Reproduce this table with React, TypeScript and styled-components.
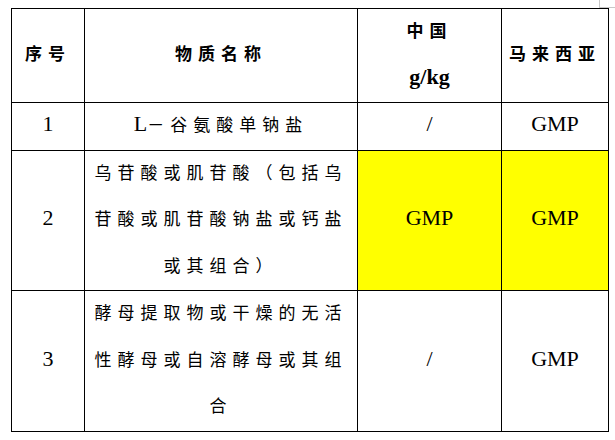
import styled, { createGlobalStyle } from 'styled-components';

const GlobalStyle = createGlobalStyle`
  html, body {
    margin: 0;
    padding: 0;
    background: #fff;
  }
  body {
    font-family: "Liberation Serif", "Noto Sans CJK SC", serif;
    color: #000;
  }
`;

const Page = styled.div`
  position: relative;
  width: 615px;
  height: 440px;
  padding: 8px 0 0 11px;
  box-sizing: border-box;
  overflow: hidden;
`;

// page-corner marker from the word processor, sits over the page
const CornerMark = styled.div`
  position: absolute;
  top: 0;
  left: 599px;
  width: 16px;
  height: 7px;
  border-left: 1px solid #c8c8c8;
  border-bottom: 1px solid #c8c8c8;
`;

const Table = styled.table`
  border-collapse: collapse;
  table-layout: fixed;
  width: 597px;
`;

const Cell = styled.td<{ $head?: boolean; $fill?: boolean }>`
  border: 1px solid #000;
  padding: 0;
  text-align: center;
  vertical-align: middle;
  font-family: "Liberation Serif", "Noto Sans CJK SC", serif;
  font-size: 17px;
  line-height: 46.5px;
  letter-spacing: 6px;
  font-weight: ${({ $head }) => ($head ? 700 : 400)};
  background: ${({ $fill }) => ($fill ? '#ffff00' : 'transparent')};
  white-space: nowrap;
`;

const Latin = styled.span`
  font-family: "Liberation Serif", serif;
  font-size: 22px;
  line-height: 1;
  letter-spacing: 0;
`;

const rows = [
  {
    no: '1',
    name: (
      <>
        <Latin>L</Latin>－谷氨酸单钠盐
      </>
    ),
    cn: '/',
    my: 'GMP',
    fill: false,
  },
  {
    no: '2',
    name: (
      <>
        乌苷酸或肌苷酸（包括乌
        <br />
        苷酸或肌苷酸钠盐或钙盐
        <br />
        或其组合）
      </>
    ),
    cn: 'GMP',
    my: 'GMP',
    fill: true,
  },
  {
    no: '3',
    name: (
      <>
        酵母提取物或干燥的无活
        <br />
        性酵母或自溶酵母或其组
        <br />合
      </>
    ),
    cn: '/',
    my: 'GMP',
    fill: false,
  },
];

export default function App() {
  return (
    <>
      <GlobalStyle />
      <Page>
        <CornerMark />
        <Table>
          <colgroup>
            <col style={{ width: 73 }} />
            <col style={{ width: 273 }} />
            <col style={{ width: 144 }} />
            <col style={{ width: 107 }} />
          </colgroup>
          <thead>
            <tr>
              <Cell $head>序号</Cell>
              <Cell $head>物质名称</Cell>
              <Cell $head>
                中国
                <br />
                <Latin>g/kg</Latin>
              </Cell>
              <Cell $head>马来西亚</Cell>
            </tr>
          </thead>
          <tbody>
            {rows.map((r) => (
              <tr key={r.no}>
                <Cell>
                  <Latin>{r.no}</Latin>
                </Cell>
                <Cell>{r.name}</Cell>
                <Cell $fill={r.fill}>
                  <Latin>{r.cn}</Latin>
                </Cell>
                <Cell $fill={r.fill}>
                  <Latin>{r.my}</Latin>
                </Cell>
              </tr>
            ))}
          </tbody>
        </Table>
      </Page>
    </>
  );
}
